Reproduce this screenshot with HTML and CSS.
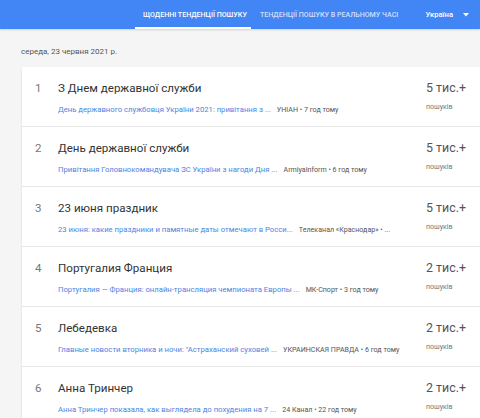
FILE: index.html
```html
<!DOCTYPE html>
<html lang="uk">
<head>
<meta charset="utf-8">
<link rel="stylesheet" href="styles.css">
</head>
<body>
<header class="topbar">
  <nav class="tabs">
    <a class="tab active">ЩОДЕННІ ТЕНДЕНЦІЇ ПОШУКУ</a>
    <a class="tab">ТЕНДЕНЦІЇ ПОШУКУ В РЕАЛЬНОМУ ЧАСІ</a>
  </nav>
  <div class="country">Україна <svg class="caret" width="6" height="4" viewBox="0 0 6 4"><path d="M0 0h6L3 3.5z" fill="#fff"/></svg></div>
</header>
<main class="content">
  <div class="date">середа, 23 червня 2021 р.</div>
  <section class="card">
    <div class="row">
      <div class="num">1</div>
      <div class="main">
        <div class="title">З Днем державної служби</div>
        <div class="sub"><span class="link">День державного службовця України 2021: привітання з ...</span><span class="src">УНІАН • 7 год тому</span></div>
      </div>
      <div class="count"><div class="big">5 тис.+</div><div class="small">пошуків</div></div>
    </div>
    <div class="row">
      <div class="num">2</div>
      <div class="main">
        <div class="title">День державної служби</div>
        <div class="sub"><span class="link">Привітання Головнокомандувача ЗС України з нагоди Дня ...</span><span class="src">ArmiyaInform • 6 год тому</span></div>
      </div>
      <div class="count"><div class="big">5 тис.+</div><div class="small">пошуків</div></div>
    </div>
    <div class="row">
      <div class="num">3</div>
      <div class="main">
        <div class="title">23 июня праздник</div>
        <div class="sub"><span class="link">23 июня: какие праздники и памятные даты отмечают в Росси...</span><span class="src">Телеканал «Краснодар» • ...</span></div>
      </div>
      <div class="count"><div class="big">5 тис.+</div><div class="small">пошуків</div></div>
    </div>
    <div class="row">
      <div class="num">4</div>
      <div class="main">
        <div class="title">Португалия Франция</div>
        <div class="sub"><span class="link">Португалия — Франция: онлайн-трансляция чемпионата Европы ...</span><span class="src">МК-Спорт • 3 год тому</span></div>
      </div>
      <div class="count"><div class="big">2 тис.+</div><div class="small">пошуків</div></div>
    </div>
    <div class="row">
      <div class="num">5</div>
      <div class="main">
        <div class="title">Лебедевка</div>
        <div class="sub"><span class="link">Главные новости вторника и ночи: "Астраханский суховей ...</span><span class="src">УКРАИНСКАЯ ПРАВДА • 6 год тому</span></div>
      </div>
      <div class="count"><div class="big">2 тис.+</div><div class="small">пошуків</div></div>
    </div>
    <div class="row">
      <div class="num">6</div>
      <div class="main">
        <div class="title">Анна Тринчер</div>
        <div class="sub"><span class="link">Анна Тринчер показала, как выглядела до похудения на 7 ...</span><span class="src">24 Канал • 22 год тому</span></div>
      </div>
      <div class="count"><div class="big">2 тис.+</div><div class="small">пошуків</div></div>
    </div>
  </section>
</main>
</body>
</html>
```
FILE: styles.css
```css
* { box-sizing: border-box; }
html, body { margin: 0; padding: 0; }
body {
  width: 480px;
  height: 418px;
  overflow: hidden;
  background: #f5f5f5;
  font-family: Roboto, "Noto Sans", Arial, sans-serif;
}
.topbar {
  height: 29px;
  background: #4285f4;
  display: flex;
  align-items: stretch;
  padding-left: 135px;
  box-shadow: 0 1px 2px rgba(0,0,0,0.15);
}
.tabs { display: flex; }
.tab {
  display: flex;
  align-items: center;
  white-space: nowrap;
  font-size: 7.1px;
  font-weight: 500;
  color: rgba(255,255,255,0.75);
  padding: 2px 8px 0 9px;
  border-bottom: 2px solid transparent;
}
.tab.active {
  color: #fff;
  border-bottom-color: #fff;
  padding: 2px 4px 0 8px;
}
.country {
  margin-left: auto;
  margin-right: 11px;
  display: flex;
  align-items: center;
  gap: 10px;
  color: #fff;
  font-size: 7.6px;
  font-weight: 500;
}
.content { padding: 0 0 0 22px; }
.date {
  font-size: 8px;
  color: #555;
  height: 38px;
  padding-top: 18px;
  margin-left: -1px;
}
.card {
  background: #fff;
  width: 470px;
  box-shadow: 0 1px 2px rgba(0,0,0,0.12);
}
.row {
  display: flex;
  height: 60px;
  border-bottom: 1px solid #e6e6e6;
  padding-top: 13px;
}
.num {
  width: 36px;
  padding-left: 13px;
  font-size: 11.5px;
  line-height: 16px;
  color: #777;
}
.main { flex: 1; min-width: 0; overflow: hidden; }
.title {
  font-size: 11.6px;
  line-height: 16px;
  color: #333;
}
.sub {
  margin-top: 5px;
  line-height: 12px;
  white-space: nowrap;
}
.link {
  font-size: 7.7px;
  color: #4d84e2;
  margin-right: 6px;
}
.src {
  font-size: 7.1px;
  color: #555;
}
.count {
  width: 50px;
  margin-right: 16px;
}
.big {
  font-size: 12.4px;
  line-height: 16px;
  color: #555;
}
.small {
  margin-top: 5px;
  font-size: 7px;
  line-height: 12px;
  color: #777;
}
```
